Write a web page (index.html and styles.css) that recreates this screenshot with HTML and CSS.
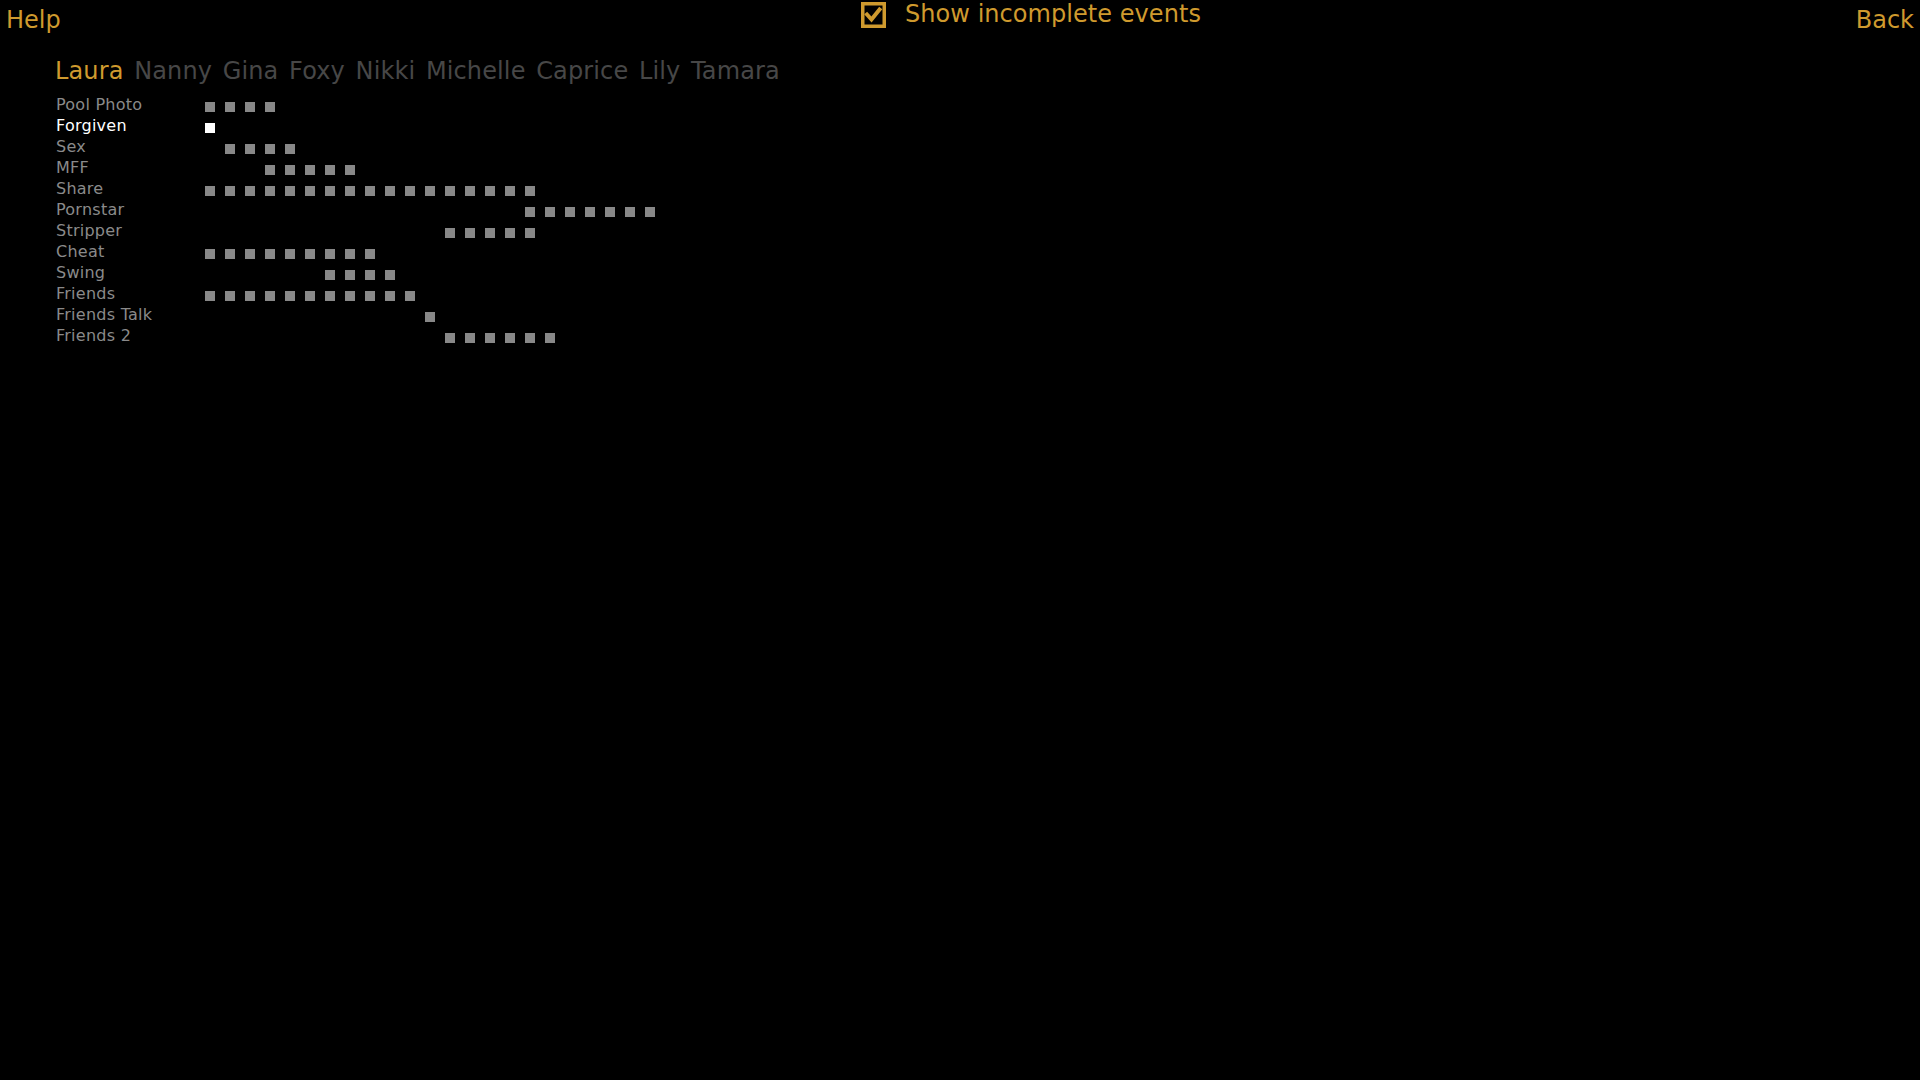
FILE: index.html
```html
<!DOCTYPE html>
<html>
<head>
<meta charset="utf-8">
<link rel="stylesheet" href="styles.css">
</head>
<body>
<div class="screen">
  <header class="topbar">
    <a class="nav help">Help</a>
    <div class="toggle">
      <svg class="checkbox" width="25" height="26" viewBox="0 0 25 26">
        <rect x="1.75" y="1.75" width="21.5" height="22.5" fill="none" stroke="#cf9a2e" stroke-width="3.5"/>
        <polyline points="6,12.5 10.5,17.5 18.5,7.5" fill="none" stroke="#cf9a2e" stroke-width="4" stroke-linecap="square"/>
      </svg>
      <span class="toggle-label">Show incomplete events</span>
    </div>
    <a class="nav back">Back</a>
  </header>

  <nav class="tabs">
    <span class="tab active">Laura</span>
    <span class="tab">Nanny</span>
    <span class="tab">Gina</span>
    <span class="tab">Foxy</span>
    <span class="tab">Nikki</span>
    <span class="tab">Michelle</span>
    <span class="tab">Caprice</span>
    <span class="tab">Lily</span>
    <span class="tab">Tamara</span>
  </nav>

  <div class="events" id="events"></div>
</div>
<script src="app.js"></script>
</body>
</html>
```

FILE: styles.css
```css
html, body {
  margin: 0;
  padding: 0;
  background: #000;
}
body {
  width: 1920px;
  height: 1080px;
  overflow: hidden;
  font-family: "DejaVu Sans", "Noto Sans", sans-serif;
  color: #8a8a8a;
}
.screen {
  display: flex;
  flex-direction: column;
}
.topbar {
  display: grid;
  grid-template-columns: 861px auto 1fr;
  align-items: start;
  height: 42px;
}
.nav {
  font-size: 24px;
  line-height: 28px;
  color: #cf9a2e;
  padding-top: 6px;
}
.help {
  padding-left: 6px;
}
.back {
  justify-self: end;
  padding-right: 6px;
}
.toggle {
  display: flex;
  align-items: flex-start;
  gap: 19px;
}
.checkbox {
  display: block;
  margin-top: 2px;
}
.toggle-label {
  font-size: 24px;
  line-height: 28px;
  color: #cf9a2e;
  letter-spacing: 0.05px;
}
.tabs {
  display: flex;
  gap: 10.7px;
  padding-left: 55px;
  padding-top: 15px;
  font-size: 24px;
  line-height: 28px;
  letter-spacing: 0.12px;
}
.tab {
  color: #474747;
}
.tab.active {
  color: #cf9a2e;
}
.events {
  padding-top: 9px;
  padding-left: 56px;
  display: flex;
  flex-direction: column;
}
.row {
  display: flex;
  height: 21px;
  align-items: flex-start;
}
.label {
  width: 149px;
  font-size: 16px;
  line-height: 21px;
  letter-spacing: 0.25px;
  color: #8a8a8a;
  white-space: nowrap;
}
.label.current {
  color: #ffffff;
}
.cells {
  display: flex;
  gap: 10px;
  padding-top: 8px;
}
.cell {
  width: 10px;
  height: 10px;
  background: #888888;
}
.cell.empty {
  background: transparent;
}
.cell.current {
  background: #ffffff;
}
```

FILE: app.js
```js
const data = [
  ["Pool Photo", 0, 4],
  ["Forgiven", 0, 1, true],
  ["Sex", 1, 4],
  ["MFF", 3, 5],
  ["Share", 0, 17],
  ["Pornstar", 16, 7],
  ["Stripper", 12, 5],
  ["Cheat", 0, 9],
  ["Swing", 6, 4],
  ["Friends", 0, 11],
  ["Friends Talk", 11, 1],
  ["Friends 2", 12, 6]
];
const root = document.getElementById("events");
data.forEach(([name, start, count, current]) => {
  const row = document.createElement("div");
  row.className = "row";
  const label = document.createElement("div");
  label.className = "label" + (current ? " current" : "");
  label.textContent = name;
  row.appendChild(label);
  const cells = document.createElement("div");
  cells.className = "cells";
  for (let i = 0; i < start + count; i++) {
    const c = document.createElement("span");
    c.className = "cell" + (i < start ? " empty" : (current ? " current" : ""));
    cells.appendChild(c);
  }
  row.appendChild(cells);
  root.appendChild(row);
});
```
